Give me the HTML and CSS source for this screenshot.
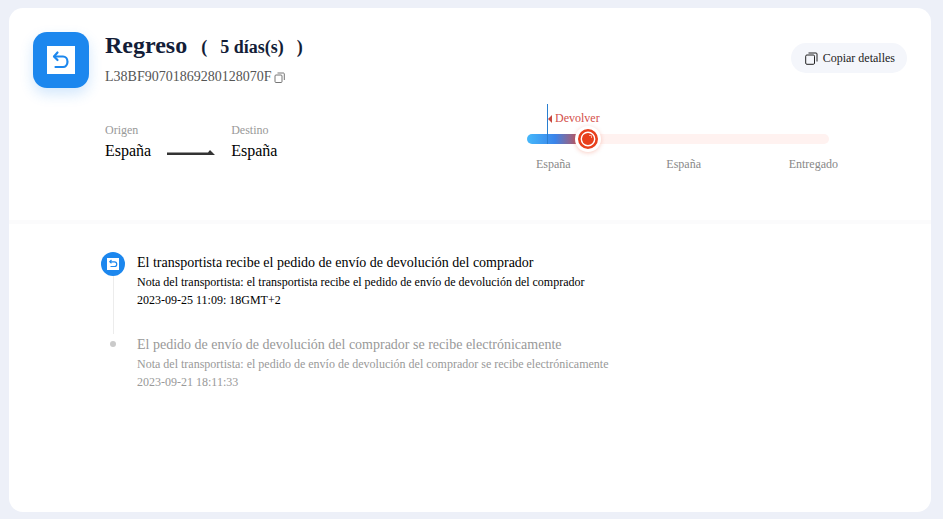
FILE: index.html
```html
<!DOCTYPE html>
<html lang="es">
<head>
    <meta charset="UTF-8">
    <title>Regreso</title>
    <link rel="stylesheet" href="styles.css">
</head>
<body>
    <main class="card">
        <section class="summary">
            <div class="summary-left">
                <div class="status-icon">
                    <div class="status-icon-inner">
                        <svg width="28" height="28" viewBox="0 0 28 28" fill="none" stroke="#1c87ee" stroke-width="2.2" stroke-linecap="round" stroke-linejoin="round">
                            <path d="M10.5 6.5 7 10.5l3.5 3.5"/>
                            <path d="M7.5 10.5H16a4.5 5.25 0 0 1 0 10.5H8.5"/>
                        </svg>
                    </div>
                </div>
                <div class="summary-text">
                    <div class="title-row">
                        <h1>Regreso</h1>
                        <span class="days"><span>(</span><span>5 días(s)</span><span>)</span></span>
                    </div>
                    <div class="tracking">
                        L38BF90701869280128070F
                        <svg width="11" height="11" viewBox="0 0 11 11" fill="none" stroke="#666" stroke-width="0.9">
                            <rect x="1" y="3" width="7" height="7.5" rx="1"/>
                            <path d="M3.5 1h6a1 1 0 0 1 .8 1v6"/>
                        </svg>
                    </div>
                    <div class="route">
                        <div class="route-place">
                            <span class="route-label">Origen</span>
                            <span class="route-name">España</span>
                        </div>
                        <svg class="route-arrow" width="48" height="8" viewBox="0 0 48 8">
                            <path d="M0 3.5h41L43 1l5 5H0z" fill="#333"/>
                        </svg>
                        <div class="route-place">
                            <span class="route-label">Destino</span>
                            <span class="route-name">España</span>
                        </div>
                    </div>
                </div>
            </div>

            <div class="progress">
                <div class="track">
                    <div class="track-fill"></div>
                    <div class="return-tag"><i class="tag-arrow"></i>Devolver</div>
                    <div class="knob">
                        <svg width="16" height="16" viewBox="0 0 16 16">
                            <circle cx="8" cy="8" r="6.7" fill="none" stroke="#fff" stroke-width="1.4"/>
                            <rect x="3" y="3.5" width="9.5" height="9" rx="2" fill="#e8401c"/>
                            <path d="M9 4.5h2.5V7" fill="none" stroke="#ffc9bc" stroke-width="0.8"/>
                        </svg>
                    </div>
                </div>
                <div class="progress-labels">
                    <span>España</span>
                    <span class="label-mid">España</span>
                    <span>Entregado</span>
                </div>
            </div>

            <button class="copy-btn">
                <svg width="13" height="13" viewBox="0 0 13 13" fill="none" stroke="#222" stroke-width="1">
                    <rect x="0.7" y="3" width="8.8" height="9.3" rx="1.2"/>
                    <path d="M3.5 1H11a1 1 0 0 1 1 1v7.5"/>
                </svg>
                Copiar detalles
            </button>
        </section>

        <section class="timeline">
            <div class="event">
                <div class="event-marker">
                    <div class="event-dot">
                        <div class="event-dot-inner">
                            <svg width="10" height="10" viewBox="0 0 10 10" fill="none" stroke="#1c87ee" stroke-width="1.2">
                                <path d="M3.5 1 1.8 2.8l1.7 1.5"/>
                                <path d="M2 2.8h4.500a2.2 2.3 0 0 1 0 4.700H2.500"/>
                            </svg>
                        </div>
                    </div>
                    <div class="event-line"></div>
                </div>
                <div class="event-body">
                    <p class="event-title">El transportista recibe el pedido de envío de devolución del comprador</p>
                    <p class="event-note">Nota del transportista: el transportista recibe el pedido de envío de devolución del comprador</p>
                    <p class="event-note">2023-09-25 11:09: 18GMT+2</p>
                </div>
            </div>
            <div class="event event-old">
                <div class="event-marker">
                    <div class="event-small-dot"></div>
                </div>
                <div class="event-body">
                    <p class="event-title">El pedido de envío de devolución del comprador se recibe electrónicamente</p>
                    <p class="event-note">Nota del transportista: el pedido de envío de devolución del comprador se recibe electrónicamente</p>
                    <p class="event-note">2023-09-21 18:11:33</p>
                </div>
            </div>
        </section>
    </main>
</body>
</html>
```

FILE: styles.css
```css
* {
    box-sizing: border-box;
}
html, body {
    height: 100%;
}
body {
    margin: 0;
    padding: 8px 12px 7px 9px;
    background-color: #edf0f8;
    color: #000;
    font-family: "Liberation Serif", "Times New Roman", serif;
    overflow: hidden;
}
p, h1 {
    margin: 0;
}
.card {
    height: 100%;
    background: #fff;
    border-radius: 14px;
    overflow: hidden;
}
.summary {
    position: relative;
    display: flex;
    height: 216px;
    padding: 23px 24px 0;
    border-bottom: 4px solid #fbfbfc;
}
.summary-left {
    display: flex;
    gap: 16px;
    width: 494px;
}
.status-icon {
    display: flex;
    align-items: center;
    justify-content: center;
    width: 56px;
    height: 56px;
    margin-top: 1px;
    border-radius: 14px;
    background: #1c87ee;
    box-shadow: 0 6px 14px rgba(28, 135, 238, 0.2);
}
.status-icon-inner {
    display: flex;
    align-items: center;
    justify-content: center;
    width: 28px;
    height: 28px;
    background: #fff;
}
.title-row {
    display: flex;
    align-items: baseline;
    height: 30px;
    color: #131d38;
}
h1 {
    font-size: 24px;
    line-height: 28px;
    font-weight: 700;
}
.days {
    display: flex;
    gap: 13px;
    margin-left: 14px;
    font-size: 18px;
    font-weight: 700;
}
.tracking {
    display: flex;
    align-items: center;
    gap: 3px;
    margin-top: 8px;
    font-size: 14px;
    line-height: 16px;
    color: #555;
}
.route {
    display: flex;
    gap: 16px;
    margin-top: 38px;
}
.route-place {
    display: flex;
    flex-direction: column;
    gap: 5px;
}
.route-label {
    font-size: 12px;
    line-height: 14px;
    color: #999;
}
.route-name {
    font-size: 16px;
    line-height: 18px;
}
.route-arrow {
    margin-top: 26px;
}
.progress {
    width: 311px;
    padding-top: 103px;
}
.track {
    position: relative;
    width: 302px;
    height: 10px;
    border-radius: 5px;
    background: #fff2f0;
}
.track-fill {
    width: 56px;
    height: 10px;
    border-radius: 5px 0 0 5px;
    background: linear-gradient(90deg, #45b8fb, #3a84ea 50%, #d84b3e);
}
.return-tag {
    position: absolute;
    left: 20px;
    bottom: 0;
    height: 40px;
    padding: 6px 0 0 7px;
    border-left: 1px solid #2a7fd0;
    font-size: 12px;
    line-height: 16px;
    color: #d4504a;
}
.tag-arrow {
    position: absolute;
    left: 0;
    top: 11px;
    border: 4px solid transparent;
    border-left-width: 0;
    border-right: 4px solid #c8483f;
}
.knob {
    position: absolute;
    left: 48px;
    top: -8px;
    display: flex;
    align-items: center;
    justify-content: center;
    width: 26px;
    height: 26px;
    border: 3px solid #fff;
    border-radius: 50%;
    background: #e8401c;
    box-shadow: 0 1px 4px rgba(232, 64, 28, 0.25);
}
.progress-labels {
    display: flex;
    justify-content: space-between;
    margin-top: 13px;
    padding-left: 9px;
    font-size: 12px;
    line-height: 14px;
    color: #888;
}
.label-mid {
    margin-left: 8px;
}
.copy-btn {
    position: absolute;
    top: 35px;
    right: 24px;
    display: flex;
    align-items: center;
    gap: 5px;
    height: 30px;
    padding: 0 12px 0 14px;
    border: 0;
    border-radius: 15px;
    background: #f4f6fb;
    color: #222;
    font-family: inherit;
    font-size: 12px;
}
.timeline {
    padding: 28px 0 0 92px;
}
.event {
    display: flex;
    gap: 12px;
    height: 82px;
}
.event-marker {
    display: flex;
    flex-direction: column;
    align-items: center;
    width: 24px;
}
.event-dot {
    display: flex;
    flex: none;
    align-items: center;
    justify-content: center;
    width: 24px;
    height: 24px;
    border-radius: 50%;
    background: #1c87ee;
}
.event-dot-inner {
    display: flex;
    align-items: center;
    justify-content: center;
    width: 12px;
    height: 12px;
    background: #fff;
}
.event-line {
    width: 1px;
    height: 62px;
    background: #ececec;
}
.event-small-dot {
    width: 6px;
    height: 6px;
    margin-top: 7px;
    border-radius: 50%;
    background: #cacaca;
}
.event-title {
    margin-top: 2px;
    font-size: 14px;
    line-height: 18px;
}
.event-note {
    margin-top: 2px;
    font-size: 12px;
    line-height: 16px;
}
.event-old {
    color: #999;
}
```
